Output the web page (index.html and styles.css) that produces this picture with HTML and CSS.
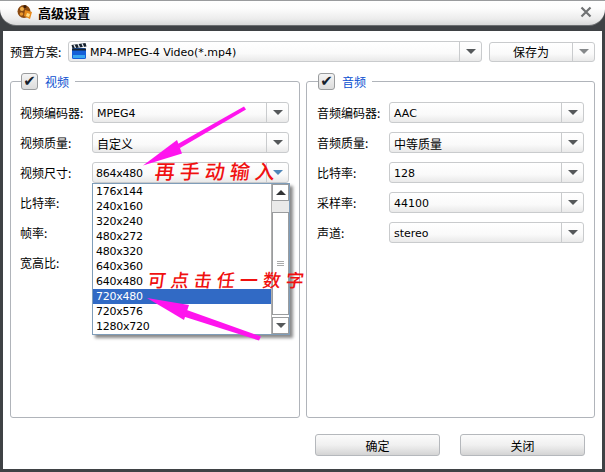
FILE: index.html
```html
<!DOCTYPE html>
<html lang="zh">
<head>
<meta charset="utf-8">
<title>高级设置</title>
<link rel="stylesheet" href="styles.css">
</head>
<body>
<div class="window">
  <header class="titlebar">
    <svg class="logo" width="16" height="16" viewBox="0 0 16 16"><circle cx="7" cy="7.5" r="6.5" fill="#8a4a12"/><circle cx="5" cy="5" r="2" fill="#f2b24a"/><circle cx="4.5" cy="10" r="1.8" fill="#e8962c"/><path d="M8 6l7 2-2 7-6-3z" fill="#e88a1a"/><path d="M10 9l3 1-1 3-3-1z" fill="#ffe08a"/><circle cx="8" cy="2.5" r="1.5" fill="#3a1c08"/></svg>
    <span class="title">高级设置</span>
    <svg class="close" width="12" height="12" viewBox="0 0 12 12"><path d="M1.5 1.5l9 9M10.500 1.500l-9 9" stroke="#6f7173" stroke-width="2.200"/></svg>
  </header>
  <main class="content">
    <div class="preset">
      <label class="preset-label">预置方案:</label>
      <div class="combo preset-combo">
        <svg class="clapper" width="16" height="17" viewBox="0 0 16 17"><rect x="1" y="5" width="14" height="11" rx="1.500" fill="#1560d8"/><path d="M2 12h12v3H2z" fill="#39a6f0"/><path d="M0.500 2l14-2 1 3.500-14 2z" fill="#15202c"/><path d="M3 1.700l1.500 3.300M7 1.100l1.500 3.300M11 .6l1.500 3.300" stroke="#dfe6ee" stroke-width="1.300"/><rect x="1" y="5.500" width="14" height="2" fill="#15202c"/></svg>
        <span class="combo-text">MP4-MPEG-4 Video(*.mp4)</span>
        <span class="arrow-cell"><i class="tri"></i></span>
      </div>
      <div class="combo save">
        <span class="combo-text save-text">保存为</span>
        <span class="arrow-cell"><i class="tri light"></i></span>
      </div>
    </div>
    <div class="groups">
      <fieldset class="group">
        <legend class="legend"><span class="check">✔</span><span class="legend-text">视频</span></legend>
        <div class="row"><label>视频编码器:</label><div class="combo"><span class="combo-text">MPEG4</span><span class="arrow-cell"><i class="tri"></i></span></div></div>
        <div class="row"><label>视频质量:</label><div class="combo"><span class="combo-text cjk">自定义</span><span class="arrow-cell"><i class="tri"></i></span></div></div>
        <div class="row"><label>视频尺寸:</label><div class="combo open"><span class="combo-text narrow">864x480</span><span class="arrow-cell"><i class="tri blue"></i></span>
          <div class="popup">
            <ul class="list">
              <li>176x144</li><li>240x160</li><li>320x240</li><li>480x272</li><li>480x320</li><li>640x360</li><li>640x480</li><li class="selected">720x480</li><li>720x576</li><li>1280x720</li>
            </ul>
            <div class="scrollbar">
              <span class="sb-btn"><i class="tri up"></i></span>
              <span class="sb-track"></span>
              <span class="sb-thumb"><i class="grip"></i></span>
              <span class="sb-btn"><i class="tri"></i></span>
            </div>
          </div>
        </div></div>
        <div class="row"><label>比特率:</label><div class="combo"></div></div>
        <div class="row"><label>帧率:</label><div class="combo"></div></div>
        <div class="row"><label>宽高比:</label><div class="combo"></div></div>
      </fieldset>
      <fieldset class="group">
        <legend class="legend"><span class="check">✔</span><span class="legend-text">音频</span></legend>
        <div class="row"><label>音频编码器:</label><div class="combo"><span class="combo-text">AAC</span><span class="arrow-cell"><i class="tri"></i></span></div></div>
        <div class="row"><label>音频质量:</label><div class="combo"><span class="combo-text cjk">中等质量</span><span class="arrow-cell"><i class="tri"></i></span></div></div>
        <div class="row"><label>比特率:</label><div class="combo"><span class="combo-text">128</span><span class="arrow-cell"><i class="tri"></i></span></div></div>
        <div class="row"><label>采样率:</label><div class="combo"><span class="combo-text">44100</span><span class="arrow-cell"><i class="tri"></i></span></div></div>
        <div class="row"><label>声道:</label><div class="combo"><span class="combo-text">stereo</span><span class="arrow-cell"><i class="tri"></i></span></div></div>
      </fieldset>
    </div>
    <footer class="actions">
      <button class="btn">确定</button>
      <button class="btn">关闭</button>
    </footer>
  </main>
  <svg class="arrows" width="605" height="472" viewBox="0 0 605 472">
    <path d="M244 106.500L246 109.500 180 148 176 145z" fill="#ff14ee"/>
    <path d="M143 165.500L177 140 182 153.500z" fill="#ff14ee"/>
    <path d="M147 298L189 305 184 320z" fill="#ff14ee"/>
    <path d="M184 309L261 336.500 259 340.500 182 316z" fill="#ff14ee"/>
  </svg>
  <span class="note note-top">再手动输入</span>
  <span class="note note-mid">可点击任一数字</span>
</div>
</body>
</html>
```
FILE: styles.css
```css
* { box-sizing: border-box; }
html, body { margin: 0; padding: 0; }
body {
  width: 605px;
  height: 472px;
  overflow: hidden;
  background: #fff;
  font-family: "DejaVu Sans", "Noto Sans CJK SC", sans-serif;
  font-size: 11px;
  font-weight: 400;
  color: #000;
}
.window {
  position: relative;
  width: 605px;
  height: 472px;
  display: flex;
  flex-direction: column;
  background: #3f4245;
  border-top: 1px solid #9a9c9e;
}
.titlebar {
  height: 24px;
  flex: none;
  display: flex;
  align-items: center;
  padding: 0 13px 2px 17px;
  background: linear-gradient(#fff 0, #fdfdfd 30%, #ececec 75%, #d8d8d8 100%);
  border-radius: 0 0 16px 16px;
  box-shadow: 0 1px 0 #6b6e70;
}
.logo { flex: none; }
.title {
  margin-left: 5px;
  font: bold 13px "Noto Sans CJK SC", sans-serif;
}
.close { margin-left: auto; }
.content {
  flex: 1;
  margin: 6px 3px 3px;
  background: #fff;
  padding: 10px 7px 0;
  display: flex;
  flex-direction: column;
  min-height: 0;
}
.preset {
  display: flex;
  align-items: center;
  height: 21px;
}
.preset-label {
  width: 58px;
  flex: none;
  font: 12px "Noto Sans CJK SC", sans-serif;
}
.combo {
  position: relative;
  display: flex;
  align-items: center;
  height: 21px;
  border: 1px solid #c9cbcd;
  border-radius: 3px;
  background: linear-gradient(#fff, #fafafa 60%, #e9e9e9);
}
.preset-combo { flex: none; width: 414px; }
.clapper { flex: none; margin-left: 2px; }
.preset-combo .combo-text { padding-left: 3px; }
.combo-text { flex: 1; padding: 1px 0 0 4px; white-space: nowrap; }
.narrow { padding-left: 3px; letter-spacing: -0.25px; }
.cjk { font: 12px "Noto Sans CJK SC", sans-serif; }
.arrow-cell {
  flex: none;
  width: 22px;
  height: 100%;
  display: flex;
  align-items: center;
  justify-content: center;
  border-left: 1px solid #c9cbcd;
}
.tri {
  display: block;
  width: 0;
  height: 0;
  border-left: 5px solid transparent;
  border-right: 5px solid transparent;
  border-top: 5px solid #55585a;
}
.tri.light { border-top-color: #85888a; }
.tri.blue { border-top-color: #4f86b8; }
.tri.up { border-top: 0; border-bottom: 5px solid #303234; }
.save {
  flex: none;
  width: 106px;
  margin-left: 7px;
  height: 20px;
}
.save-text {
  padding: 0;
  text-align: center;
  font: 12px "Noto Sans CJK SC", sans-serif;
}
.groups {
  flex: none;
  display: flex;
  gap: 6px;
  margin-top: 11px;
  height: 345px;
}
.group {
  margin: 0;
  width: 290px;
  height: 345px;
  min-width: 0;
  border: 1px solid #b0b4ba;
  border-radius: 3px;
  padding: 12px 11px 0 9px;
}
.group + .group { width: 289px; padding-left: 10px; }
.legend {
  display: flex;
  align-items: center;
  height: 17px;
  padding: 0 6px 0 0;
  margin-left: 1px;
  font: 12px "Noto Sans CJK SC", sans-serif;
  color: #0a50d0;
}
.check {
  width: 17px;
  height: 17px;
  margin-right: 7px;
  display: flex;
  align-items: center;
  justify-content: center;
  border: 1px solid #9a9c9e;
  border-radius: 3px;
  background: linear-gradient(#f4f4f4, #dcdcdc);
  color: #15202c;
  font: 15px "DejaVu Sans", sans-serif;
  line-height: 1;
}
.row {
  display: flex;
  align-items: center;
  height: 21px;
  margin-bottom: 9px;
}
.row label {
  width: 72px;
  flex: none;
  font: 12px "Noto Sans CJK SC", sans-serif;
}
.row .combo { flex: none; width: 197px; }
.group + .group .row .combo { width: 195px; }
.combo.open { border-color: #c9cbcd; }
.popup {
  position: absolute;
  z-index: 2;
  left: -1px;
  top: 20px;
  width: 198px;
  height: 152px;
  display: flex;
  background: #fff;
  border: 1px solid #7f9db9;
  box-shadow: 3px 3px 3px #8a8a8a;
}
.list {
  flex: 1;
  margin: 0;
  padding: 0;
  list-style: none;
  letter-spacing: -0.25px;
}
.list li {
  height: 15px;
  line-height: 16px;
  padding-left: 3px;
}
.list li.selected { background: #316ac5; color: #fff; }
.scrollbar {
  flex: none;
  width: 18px;
  display: flex;
  flex-direction: column;
  background: #fff;
  border-left: 1px solid #b0b0b0;
}
.sb-btn {
  flex: none;
  height: 17px;
  display: flex;
  align-items: center;
  justify-content: center;
  border: 1px solid #9a9c9e;
  background: #fff;
}
.sb-track {
  flex: none;
  height: 11px;
  background: #e9e9e9;
}
.sb-thumb {
  flex: 1;
  display: flex;
  align-items: center;
  justify-content: center;
  border: 1px solid #9a9c9e;
  margin-bottom: 2px;
}
.grip {
  display: block;
  width: 7px;
  height: 5px;
  border-top: 1px solid #aaa;
  border-bottom: 1px solid #aaa;
  background: linear-gradient(#fff 1px, #aaa 1px, #aaa 2px, #fff 2px);
}
.actions {
  flex: none;
  display: flex;
  justify-content: flex-end;
  gap: 20px;
  padding-right: 10px;
  margin-top: 16px;
}
.btn {
  width: 125px;
  height: 22px;
  padding: 0;
  border: 1px solid #b5b8bc;
  border-radius: 3px;
  background: linear-gradient(#fbfbfb, #f0f0f0 50%, #d4d4d4);
  font: 12px "Noto Sans CJK SC", sans-serif;
  color: #000;
}
.arrows {
  position: absolute;
  left: 0;
  top: -1px;
  z-index: 3;
  pointer-events: none;
}
.note {
  position: absolute;
  z-index: 4;
  color: #f01010;
  font-family: "Noto Sans CJK SC", sans-serif;
  font-weight: 500;
  white-space: nowrap;
  line-height: 1;
}
.note-top {
  left: 155px;
  top: 160px;
  font-size: 20px;
  letter-spacing: 5px;
  transform: skewX(-8deg);
}
.note-mid {
  left: 148px;
  top: 269px;
  font-size: 18px;
  letter-spacing: 5px;
  transform: skewX(-8deg);
}
```
